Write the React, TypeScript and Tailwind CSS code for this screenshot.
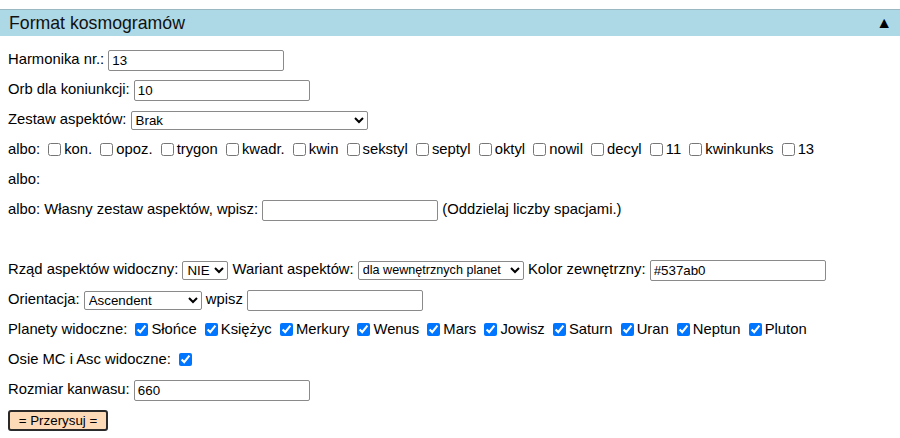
import { ReactNode } from "react";

const aspects = ["kon.", "opoz.", "trygon", "kwadr.", "kwin", "sekstyl", "septyl", "oktyl", "nowil", "decyl", "11", "kwinkunks", "13"];
const planets = ["Słońce", "Księżyc", "Merkury", "Wenus", "Mars", "Jowisz", "Saturn", "Uran", "Neptun", "Pluton"];

const Row = ({ children }: { children?: ReactNode }) => (
  <div className="h-[30px] leading-[30px] whitespace-nowrap">{children}</div>
);

const TextBox = ({ value = "", w = "w-[176px]" }: { value?: string; w?: string }) => (
  <input
    type="text"
    defaultValue={value}
    className={`${w} h-[21px] rounded-[2px] border border-[#8a8a8a] bg-white px-[3px] align-middle text-[13.33px] leading-[17px] text-black`}
  />
);

const Check = ({ on = false }: { on?: boolean }) => (
  <input
    type="checkbox"
    defaultChecked={on}
    className="m-[3px_3px_3px_4px] h-[13px] w-[13px] align-[-2px] accent-[#0075ff]"
  />
);

export default function App() {
  return (
    <div className="min-h-screen bg-white font-['Liberation_Sans',Arial,sans-serif] text-[14.8px] text-black">
      <div className="pt-[9px]">
        <div className="flex h-[27px] items-center justify-between border-t border-[#9ab8c2] bg-[#add8e6] pl-[9px] pr-[8px]">
          <span className="text-[17.7px] text-[#111]">Format kosmogramów</span>
          <span className="text-[16px] leading-none">▲</span>
        </div>
      </div>

      <div className="px-2 pt-[8px]">
        <Row>
          Harmonika nr.: <TextBox value="13" />
        </Row>
        <Row>
          Orb dla koniunkcji: <TextBox value="10" />
        </Row>
        <Row>
          Zestaw aspektów:{" "}
          <select defaultValue="Brak" className="h-[19px] w-[237px] rounded-[2px] border border-[#8a8a8a] bg-white align-middle text-[13.33px]">
            <option>Brak</option>
          </select>
        </Row>
        <Row>
          albo:{" "}
          {aspects.map((a) => (
            <span key={a}>
              <Check />
              {a}{" "}
            </span>
          ))}
        </Row>
        <Row>albo:</Row>
        <Row>
          albo: Własny zestaw aspektów, wpisz: <TextBox /> (Oddzielaj liczby spacjami.)
        </Row>
        <Row />
        <Row>
          Rząd aspektów widoczny:{" "}
          <select defaultValue="NIE" className="h-[19px] w-[46px] rounded-[2px] border border-[#8a8a8a] bg-white align-middle text-[13.33px]">
            <option>NIE</option>
            <option>TAK</option>
          </select>{" "}
          Wariant aspektów:{" "}
          <select className="h-[19px] w-[166px] rounded-[2px] border border-[#8a8a8a] bg-white align-middle text-[12.6px]">
            <option>dla wewnętrznych planet</option>
          </select>{" "}
          Kolor zewnętrzny: <TextBox value="#537ab0" />
        </Row>
        <Row>
          Orientacja:{" "}
          <select className="h-[19px] w-[118px] rounded-[2px] border border-[#8a8a8a] bg-white align-middle text-[13.33px]">
            <option>Ascendent</option>
          </select>{" "}
          wpisz <TextBox />
        </Row>
        <Row>
          Planety widoczne:{" "}
          {planets.map((p) => (
            <span key={p}>
              <Check on />
              {p}{" "}
            </span>
          ))}
        </Row>
        <Row>
          Osie MC i Asc widoczne: <Check on />
        </Row>
        <Row>
          Rozmiar kanwasu: <TextBox value="660" />
        </Row>
        <Row>
          <button className="h-[21px] w-[100px] rounded-[3px] border-2 border-[#2a2a2a] bg-[#fcdab7] align-middle text-[13.33px] leading-[15px]">
            = Przerysuj =
          </button>
        </Row>
      </div>
    </div>
  );
}
